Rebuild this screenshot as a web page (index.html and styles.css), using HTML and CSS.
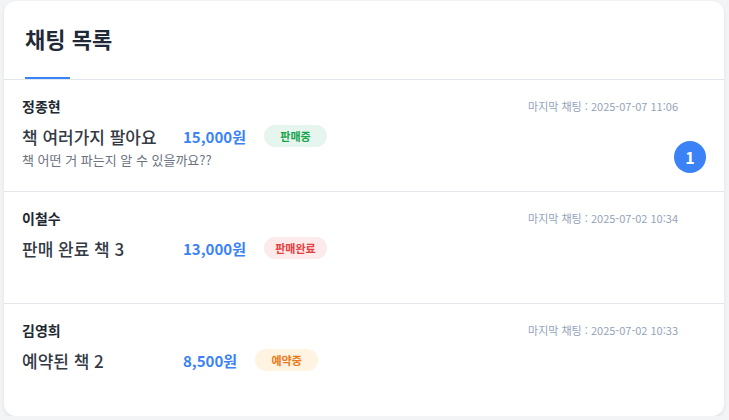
FILE: index.html
```html
<!DOCTYPE html>
<html lang="ko">
<head>
<meta charset="utf-8">
<link rel="stylesheet" href="styles.css">
</head>
<body>
<div class="card">
  <div class="header">
    <h1 class="title">채팅 목록</h1>
    <div class="tab-line"></div>
  </div>
  <div class="row">
    <div class="main">
      <div class="name">정종현</div>
      <div class="info">
        <span class="book">책 여러가지 팔아요</span>
        <span class="price">15,000원</span>
        <span class="badge sale">판매중</span>
      </div>
      <div class="msg">책 어떤 거 파는지 알 수 있을까요??</div>
    </div>
    <div class="side">
      <div class="time">마지막 채팅 : 2025-07-07 11:06</div>
      <div class="unread">1</div>
    </div>
  </div>
  <div class="row">
    <div class="main">
      <div class="name">이철수</div>
      <div class="info">
        <span class="book">판매 완료 책 3</span>
        <span class="price">13,000원</span>
        <span class="badge done">판매완료</span>
      </div>
    </div>
    <div class="side">
      <div class="time">마지막 채팅 : 2025-07-02 10:34</div>
    </div>
  </div>
  <div class="row last">
    <div class="main">
      <div class="name">김영희</div>
      <div class="info">
        <span class="book">예약된 책 2</span>
        <span class="price">8,500원</span>
        <span class="badge reserved">예약중</span>
      </div>
    </div>
    <div class="side">
      <div class="time">마지막 채팅 : 2025-07-02 10:33</div>
    </div>
  </div>
</div>
</body>
</html>
```
FILE: styles.css
```css
* { box-sizing: border-box; }
html, body { margin: 0; padding: 0; }
body {
  background: #f3f4f6;
  font-family: "Noto Sans CJK KR", "Noto Sans", sans-serif;
  padding: 1px 5px 0 4px;
}
.card {
  background: #fff;
  border-radius: 12px;
  box-shadow: 0 2px 4px rgba(0,0,0,0.08);
  height: 415px;
  overflow: hidden;
}
.header {
  height: 79px;
  border-bottom: 1px solid #e2e6ee;
  padding: 0 21px;
  display: flex;
  flex-direction: column;
  justify-content: flex-end;
}
.title {
  margin: 0 0 17px;
  font-size: 22px;
  font-weight: 700;
  color: #1f2937;
  line-height: 44px;
}
.tab-line {
  width: 45px;
  height: 2px;
  background: #3b82f6;
}
.row {
  height: 112px;
  border-bottom: 1px solid #e5e7eb;
  padding: 18px 18px 18px 18px;
  display: flex;
}
.row.last { border-bottom: none; }
.main { flex: 1; }
.name {
  font-size: 14px;
  font-weight: 700;
  color: #222831;
  line-height: 16px;
}
.info {
  display: flex;
  align-items: center;
  margin-top: 11px;
  height: 22px;
}
.book {
  width: 161px;
  font-size: 17px;
  color: #333a45;
  font-weight: 500;
}
.price {
  font-size: 15px;
  font-weight: 700;
  color: #3b82f6;
  margin-right: 18px;
}
.badge {
  font-size: 11px;
  font-weight: 700;
  width: 63px;
  text-align: center;
  height: 22px;
  line-height: 22px;
  border-radius: 11px;
}
.badge.sale { background: #e6f6ef; color: #16a34a; }
.badge.done { background: #fdeaea; color: #e53e3e; }
.badge.reserved { background: #fff3e2; color: #ea7a18; }
.msg {
  margin-top: 4px;
  font-size: 13px;
  color: #6b7280;
  line-height: 18px;
}
.side {
  display: flex;
  flex-direction: column;
  align-items: flex-end;
  justify-content: space-between;
}
.time {
  font-size: 11px;
  color: #94a3b8;
  line-height: 16px;
  margin-right: 28px;
}
.unread {
  width: 32px;
  height: 32px;
  border-radius: 50%;
  background: #3b82f6;
  color: #fff;
  font-size: 16px;
  font-weight: 700;
  display: flex;
  align-items: center;
  justify-content: center;
}
```
